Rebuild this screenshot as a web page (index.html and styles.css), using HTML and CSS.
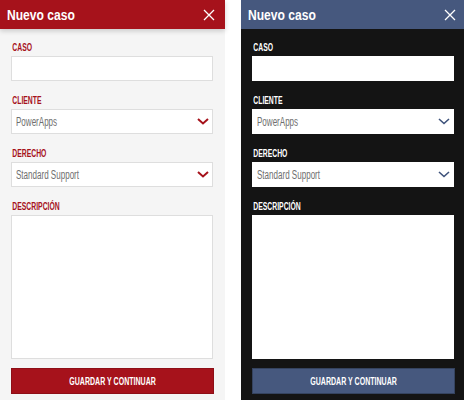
FILE: index.html
```html
<!DOCTYPE html>
<html lang="es">
<head>
<meta charset="utf-8">
<link rel="stylesheet" href="styles.css">
</head>
<body>
<div class="screen theme-red">
  <div class="header">
    <span class="title">Nuevo caso</span>
    <svg class="close" width="12" height="12" viewBox="0 0 12 12"><path d="M1 1L11 11M11 1L1 11"/></svg>
  </div>
  <div class="form">
    <label class="label">CASO</label>
    <div class="field"></div>
    <label class="label">CLIENTE</label>
    <div class="field select"><span class="val">PowerApps</span><svg class="chev" width="12" height="7" viewBox="0 0 12 7"><path d="M1 1L6 5.5L11 1"/></svg></div>
    <label class="label">DERECHO</label>
    <div class="field select"><span class="val">Standard Support</span><svg class="chev" width="12" height="7" viewBox="0 0 12 7"><path d="M1 1L6 5.5L11 1"/></svg></div>
    <label class="label">DESCRIPCIÓN</label>
    <div class="field area"></div>
    <button class="btn"><span class="btn-text">GUARDAR Y CONTINUAR</span></button>
  </div>
</div>
<div class="screen theme-dark">
  <div class="header">
    <span class="title">Nuevo caso</span>
    <svg class="close" width="12" height="12" viewBox="0 0 12 12"><path d="M1 1L11 11M11 1L1 11"/></svg>
  </div>
  <div class="form">
    <label class="label">CASO</label>
    <div class="field"></div>
    <label class="label">CLIENTE</label>
    <div class="field select"><span class="val">PowerApps</span><svg class="chev" width="12" height="7" viewBox="0 0 12 7"><path d="M1 1L6 5.5L11 1"/></svg></div>
    <label class="label">DERECHO</label>
    <div class="field select"><span class="val">Standard Support</span><svg class="chev" width="12" height="7" viewBox="0 0 12 7"><path d="M1 1L6 5.5L11 1"/></svg></div>
    <label class="label">DESCRIPCIÓN</label>
    <div class="field area"></div>
    <button class="btn"><span class="btn-text">GUARDAR Y CONTINUAR</span></button>
  </div>
</div>
</body>
</html>
```
FILE: styles.css
```css
* { box-sizing: border-box; }
html, body { margin: 0; padding: 0; }
body {
  width: 464px;
  height: 400px;
  overflow: hidden;
  background: #ffffff;
  display: flex;
  gap: 16px;
  font-family: "Liberation Sans", Arial, sans-serif;
}
.screen {
  flex: 0 0 225px;
  width: 225px;
  height: 400px;
  display: flex;
  flex-direction: column;
}
.theme-red {
  --hdr: #a6121b;
  --bg: #f5f5f5;
  --lbl: #a6121b;
  --bd: #dedede;
  --chev: #a6121b;
  --btn: #a6121b;
  --btnbd: #8e0f17;
  --chevw: 2;
}
.theme-dark {
  --hdr: #46587e;
  --bg: #141414;
  --lbl: #ffffff;
  --bd: #ffffff;
  --chev: #3e527b;
  --btn: #46587e;
  --btnbd: #35435f;
  --chevw: 1.6;
}
.header {
  height: 29px;
  background: var(--hdr);
  display: flex;
  align-items: center;
  justify-content: space-between;
  padding: 0 10px 0 7px;
  position: relative;
  z-index: 1;
}
.theme-red .header { box-shadow: 0 2px 5px rgba(0,0,0,0.18); }
.title {
  display: inline-block;
  color: #fff;
  font-weight: bold;
  font-size: 15.5px;
  line-height: 29px;
  transform: scaleX(0.78);
  transform-origin: left center;
}
.close path {
  stroke: #fff;
  stroke-width: 1.3;
  fill: none;
}
.form {
  flex: 1;
  background: var(--bg);
  padding: 13px 12px 0 11px;
  display: flex;
  flex-direction: column;
}
.label {
  display: block;
  color: var(--lbl);
  font-weight: bold;
  font-size: 10.5px;
  line-height: 11px;
  height: 11px;
  padding-left: 2px;
  margin-bottom: 3px;
  transform: scaleX(0.65);
  transform-origin: left center;
}
.field {
  height: 25px;
  background: #fff;
  border: 1px solid var(--bd);
  margin-bottom: 14px;
}
.select {
  display: flex;
  align-items: center;
  justify-content: space-between;
  padding: 0 3px 0 4px;
  color: #6e6e6e;
  font-size: 12px;
}
.val {
  display: inline-block;
  transform: scaleX(0.67);
  transform-origin: left center;
}
.chev path {
  stroke: var(--chev);
  stroke-width: var(--chevw);
  fill: none;
}
.area {
  height: 144px;
  margin-bottom: 9px;
}
.btn {
  height: 26px;
  width: 203px;
  background: var(--btn);
  border: 1px solid var(--btnbd);
  color: #fff;
  font-family: inherit;
  font-weight: bold;
  font-size: 10.5px;
  padding: 0;
}
.btn-text {
  display: inline-block;
  transform: scaleX(0.67);
}
```
